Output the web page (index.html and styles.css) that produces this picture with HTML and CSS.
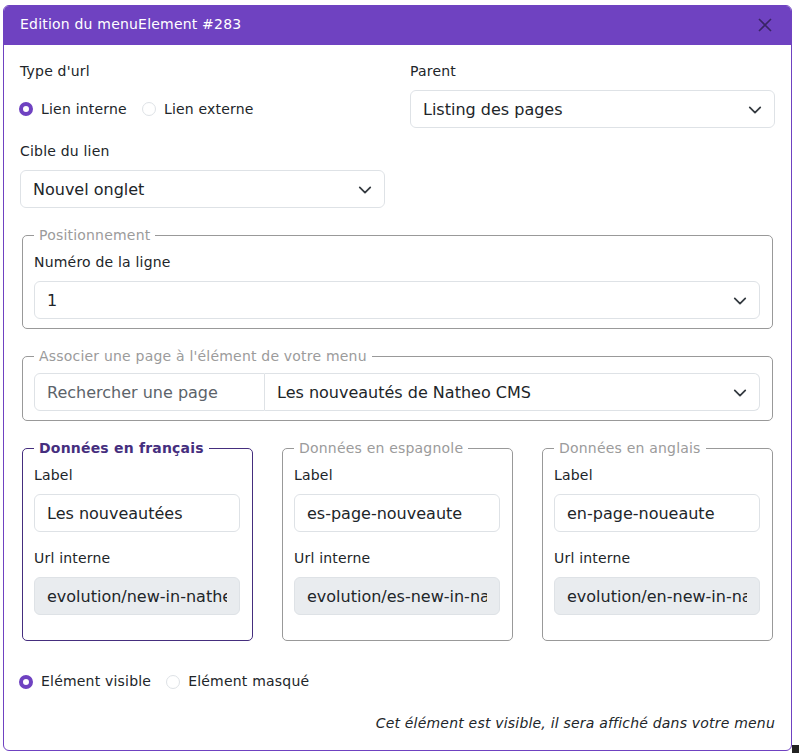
FILE: index.html
```html
<!DOCTYPE html>
<html lang="fr">
<head>
<meta charset="utf-8">
<title>Edition du menuElement #283</title>
<link rel="stylesheet" href="styles.css">
</head>
<body>
<div class="modal">
  <div class="modal-header">
    <span class="modal-title">Edition du menuElement #283</span>
    <svg class="close" width="14" height="14" viewBox="0 0 14 14"><path d="M1 1 13 13M13 1 1 13" stroke="#3a2466" stroke-width="1.6" fill="none"/></svg>
  </div>
  <div class="modal-body">
    <div class="row2">
      <div class="field">
        <div class="label">Type d'url</div>
        <div class="radios tall">
          <span class="radio checked"></span><span class="rlabel">Lien interne</span>
          <span class="radio"></span><span class="rlabel">Lien externe</span>
        </div>
      </div>
      <div class="field">
        <div class="label">Parent</div>
        <div class="select"><span>Listing des pages</span><svg class="chev" width="14" height="14" viewBox="0 0 16 16"><path d="m2 5 6 6 6-6" stroke="#343a40" stroke-width="2" fill="none" stroke-linecap="round" stroke-linejoin="round"/></svg></div>
      </div>
    </div>
    <div class="row2 row-gap">
      <div class="field">
        <div class="label">Cible du lien</div>
        <div class="select"><span>Nouvel onglet</span><svg class="chev" width="14" height="14" viewBox="0 0 16 16"><path d="m2 5 6 6 6-6" stroke="#343a40" stroke-width="2" fill="none" stroke-linecap="round" stroke-linejoin="round"/></svg></div>
      </div>
    </div>

    <fieldset class="fs">
      <legend>Positionnement</legend>
      <div class="label">Numéro de la ligne</div>
      <div class="select"><span>1</span><svg class="chev" width="14" height="14" viewBox="0 0 16 16"><path d="m2 5 6 6 6-6" stroke="#343a40" stroke-width="2" fill="none" stroke-linecap="round" stroke-linejoin="round"/></svg></div>
    </fieldset>

    <fieldset class="fs">
      <legend>Associer une page à l'élément de votre menu</legend>
      <div class="input-group">
        <span class="addon">Rechercher une page</span>
        <div class="select grow"><span>Les nouveautés de Natheo CMS</span><svg class="chev" width="14" height="14" viewBox="0 0 16 16"><path d="m2 5 6 6 6-6" stroke="#343a40" stroke-width="2" fill="none" stroke-linecap="round" stroke-linejoin="round"/></svg></div>
      </div>
    </fieldset>

    <div class="langs">
      <fieldset class="fs lang active">
        <legend>Données en français</legend>
        <div class="label">Label</div>
        <input class="input" type="text" value="Les nouveautées">
        <div class="label">Url interne</div>
        <input class="input" type="text" value="evolution/new-in-natheo-cms" disabled>
      </fieldset>
      <fieldset class="fs lang">
        <legend>Données en espagnole</legend>
        <div class="label">Label</div>
        <input class="input" type="text" value="es-page-nouveaute">
        <div class="label">Url interne</div>
        <input class="input" type="text" value="evolution/es-new-in-natheo-cms" disabled>
      </fieldset>
      <fieldset class="fs lang">
        <legend>Données en anglais</legend>
        <div class="label">Label</div>
        <input class="input" type="text" value="en-page-noueaute">
        <div class="label">Url interne</div>
        <input class="input" type="text" value="evolution/en-new-in-natheo-cms" disabled>
      </fieldset>
    </div>

    <div class="radios visible">
      <span class="radio checked"></span><span class="rlabel">Elément visible</span>
      <span class="radio"></span><span class="rlabel">Elément masqué</span>
    </div>

    <p class="help">Cet élément est visible, il sera affiché dans votre menu</p>
  </div>
</div>
<div class="corner"></div>
</body>
</html>
```

FILE: styles.css
```css
html, body {
  margin: 0;
  padding: 0;
  background: #fff;
}

body {
  font-family: "DejaVu Sans", Verdana, sans-serif;
  font-size: 14px;
  line-height: 21px;
  letter-spacing: 0.2px;
  color: #212529;
  width: 799px;
  height: 753px;
  position: relative;
  overflow: hidden;
}

.modal {
  margin: 5px 0 0 3px;
  width: 789px;
  box-sizing: border-box;
  border: 1px solid #6f42c1;
  border-radius: 6px;
  background: #fff;
  overflow: hidden;
}

.modal-header {
  height: 39px;
  box-sizing: border-box;
  background: #6f42c1;
  color: #fff;
  display: flex;
  align-items: center;
  justify-content: space-between;
  padding: 0 19px 2px 16px;
  font-size: 14px;
}

.close {
  display: block;
  margin-top: 1px;
}

.modal-body {
  padding: 16px 16px 16px 16px;
}

.row2 {
  display: grid;
  grid-template-columns: 1fr 1fr;
  column-gap: 25px;
}

.row-gap {
  margin-top: 13px;
}

.label {
  font-size: 14px;
  line-height: 21px;
  margin-bottom: 8px;
}

.radios {
  display: flex;
  align-items: center;
  font-size: 14px;
  line-height: 21px;
}

.radios.tall {
  height: 38px;
}

.radio {
  width: 14px;
  height: 14px;
  box-sizing: border-box;
  border-radius: 50%;
  border: 1px solid #dee2e6;
  background: #fff;
  margin-left: -1px;
  margin-right: 8px;
  flex: none;
}

.radio.checked {
  border: 4px solid #6f42c1;
}

.rlabel {
  margin-right: 16px;
}

.select {
  height: 38px;
  box-sizing: border-box;
  border: 1px solid #dee2e6;
  border-radius: 6px;
  background: #fff;
  display: flex;
  align-items: center;
  justify-content: space-between;
  padding: 0 12px 0 12px;
  font-size: 16px;
  letter-spacing: 0;
  color: #212529;
  white-space: nowrap;
  overflow: hidden;
}

.chev {
  flex: none;
  display: block;
  margin-top: 1px;
}

.fs {
  margin: 17px 2px 0 2px;
  padding: 6px 12px 9px 11px;
  border: 1px solid #999;
  border-radius: 5px;
  min-width: 0;
}

.fs legend {
  font-size: 14px;
  line-height: 21px;
  color: #9b9b9b;
  padding: 0 5px;
  margin-left: 0;
}

.input-group {
  display: flex;
}

.addon {
  height: 38px;
  box-sizing: border-box;
  width: 231px;
  flex: none;
  display: flex;
  align-items: center;
  padding: 0 12px;
  font-size: 16px;
  letter-spacing: 0;
  color: #5c636a;
  border: 1px solid #dee2e6;
  border-radius: 6px 0 0 6px;
  background: #fff;
}

.select.grow {
  flex: 1;
  border-left: none;
  border-radius: 0 6px 6px 0;
}

.langs {
  display: grid;
  grid-template-columns: repeat(3, 1fr);
  column-gap: 25px;
}

.langs .fs {
  margin-top: 17px;
}

.lang.active {
  border-color: #452e7e;
}

.lang.active legend {
  color: #452e7e;
  font-weight: bold;
}

.input {
  display: block;
  width: 100%;
  height: 38px;
  box-sizing: border-box;
  border: 1px solid #dee2e6;
  border-radius: 6px;
  padding: 0 12px;
  margin: 0 0 16px 0;
  font-family: "DejaVu Sans", Verdana, sans-serif;
  font-size: 16px;
  letter-spacing: 0;
  color: #212529;
  background: #fff;
  outline: none;
}

.input:disabled {
  background: #e9ecef;
  color: #212529;
  opacity: 1;
  -webkit-text-fill-color: #212529;
}

.radios.visible {
  margin-top: 30px;
}

.help {
  margin: 21px 0 0 0;
  text-align: right;
  font-style: italic;
  font-size: 14px;
  line-height: 21px;
  color: #212529;
}

.corner {
  position: absolute;
  right: 0;
  bottom: 0;
  width: 7px;
  height: 8px;
  background: #222;
}
```
